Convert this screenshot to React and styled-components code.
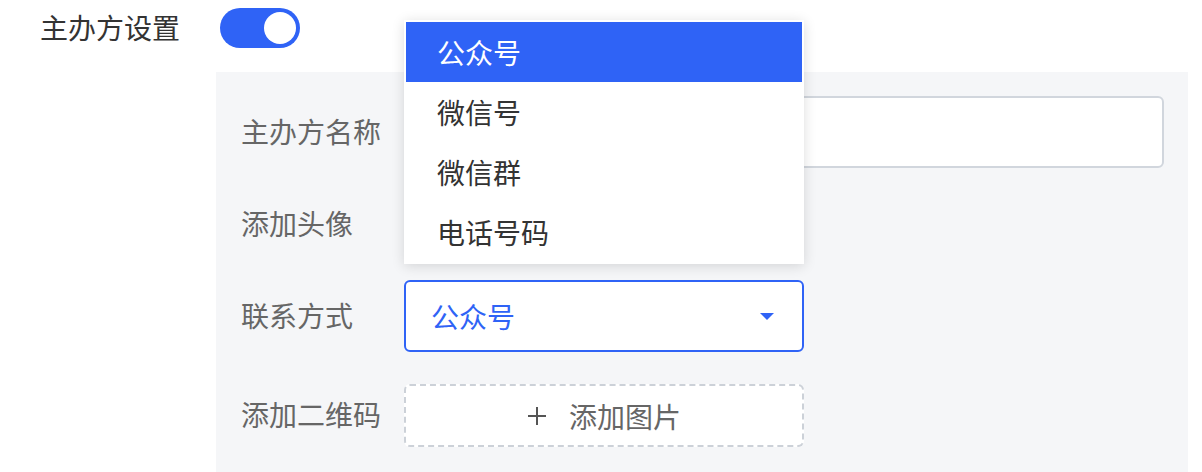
import React from 'react';
import styled, { createGlobalStyle } from 'styled-components';

const GlobalStyle = createGlobalStyle`
    html, body {
        margin: 0;
        padding: 0;
        background: #ffffff;
    }
    body {
        font-family: "Noto Sans CJK SC", "Noto Sans", sans-serif;
    }
`;

const BLUE = '#2f63f6';

const Page = styled.div`
    width: 1202px;
    height: 472px;
    overflow: hidden;
    position: relative;
`;

const TopRow = styled.div`
    display: flex;
    align-items: center;
    height: 56px;
    padding-left: 40px;
`;

const TopLabel = styled.div`
    width: 180px;
    font-size: 28px;
    color: #333333;
    line-height: 1;
    margin-top: -2px;
`;

const Switch = styled.div`
    width: 80px;
    height: 40px;
    border-radius: 20px;
    background: ${p => (p.$on ? BLUE : '#d0d4da')};
    display: flex;
    align-items: center;
    justify-content: ${p => (p.$on ? 'flex-end' : 'flex-start')};
    padding: 0 4px;
    box-sizing: border-box;
`;

const Knob = styled.div`
    width: 32px;
    height: 32px;
    border-radius: 50%;
    background: #ffffff;
`;

const Panel = styled.div`
    margin: 16px 0 0 216px;
    width: 972px;
    height: 400px;
    background: #f5f6f8;
    box-sizing: border-box;
    padding: 24px 24px 0 25px;
    display: flex;
    flex-direction: column;
    gap: 20px;
`;

const Row = styled.div`
    display: flex;
    align-items: center;
    min-height: ${p => p.$height || 72}px;
    margin-top: ${p => p.$offset || 0}px;
`;

const Label = styled.div`
    width: 163px;
    flex-shrink: 0;
    font-size: 28px;
    color: #666666;
    line-height: 1;
    margin-top: -3px;
`;

const Input = styled.div`
    flex: 1;
    height: 72px;
    box-sizing: border-box;
    border: 2px solid #d1d6dd;
    border-radius: 6px;
    background: #ffffff;
`;

const SelectWrap = styled.div`
    position: relative;
    width: 400px;
`;

const Select = styled.div`
    height: 72px;
    box-sizing: border-box;
    border: 2px solid ${BLUE};
    border-radius: 6px;
    background: #ffffff;
    display: flex;
    align-items: center;
    justify-content: space-between;
    padding: 0 28px 0 25px;
    font-size: 28px;
    color: ${BLUE};
`;

const Caret = styled.span`
    width: 0;
    height: 0;
    border-left: 7px solid transparent;
    border-right: 7px solid transparent;
    border-top: 7px solid ${BLUE};
`;

const Menu = styled.ul`
    position: absolute;
    left: 0;
    bottom: calc(100% + 16px);
    width: 400px;
    margin: 0;
    padding: 2px;
    box-sizing: border-box;
    list-style: none;
    background: #ffffff;
    box-shadow: 0 2px 12px rgba(0, 0, 0, 0.14);
    z-index: 10;
`;

const MenuItem = styled.li`
    height: 60px;
    display: flex;
    align-items: center;
    padding-left: 31px;
    font-size: 28px;
    color: ${p => (p.$active ? '#ffffff' : '#333333')};
    background: ${p => (p.$active ? BLUE : 'transparent')};
`;

const Upload = styled.div`
    width: 400px;
    height: 63px;
    box-sizing: border-box;
    border: 2px dashed #ccd1d8;
    border-radius: 6px;
    background: #ffffff;
    display: flex;
    align-items: center;
    justify-content: center;
    gap: 22px;
    font-size: 28px;
    color: #666666;
`;

const options = ['公众号', '微信号', '微信群', '电话号码'];

const PlusIcon = () => (
    <svg width="20" height="20" viewBox="0 0 20 20">
        <path d="M10 1v18M1 10h18" stroke="#555555" strokeWidth="2" />
    </svg>
);

const App = () => {
    return (
        <Page>
            <GlobalStyle />
            <TopRow>
                <TopLabel>主办方设置</TopLabel>
                <Switch $on>
                    <Knob />
                </Switch>
            </TopRow>
            <Panel>
                <Row>
                    <Label>主办方名称</Label>
                    <Input />
                </Row>
                <Row>
                    <Label>添加头像</Label>
                </Row>
                <Row>
                    <Label>联系方式</Label>
                    <SelectWrap>
                        <Select>
                            <span>公众号</span>
                            <Caret />
                        </Select>
                        <Menu>
                            {options.map((opt, i) => (
                                <MenuItem key={opt} $active={i === 0}>{opt}</MenuItem>
                            ))}
                        </Menu>
                    </SelectWrap>
                </Row>
                <Row $offset={12} $height={63}>
                    <Label>添加二维码</Label>
                    <Upload>
                        <PlusIcon />
                        <span>添加图片</span>
                    </Upload>
                </Row>
            </Panel>
        </Page>
    );
};

export default App;
